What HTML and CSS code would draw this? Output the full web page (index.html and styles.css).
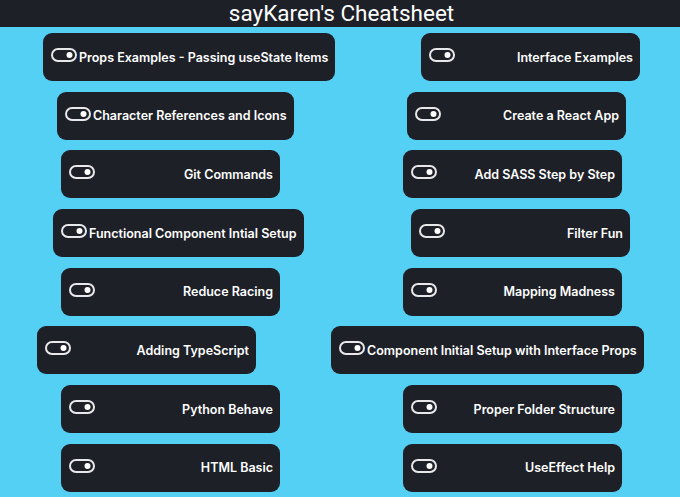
FILE: index.html
```html
<!DOCTYPE html>
<html lang="en">
<head>
<meta charset="utf-8">
<title>sayKaren's Cheatsheet</title>
<link rel="stylesheet" href="styles.css">
</head>
<body>
<header class="topbar"><h1 class="title">sayKaren's Cheatsheet</h1></header>
<main class="grid">
  <div class="cell"><button class="card off-43"><svg class="toggle" viewBox="0 0 26 14"><rect x="1" y="1" width="24" height="12" rx="6"/><circle cx="18.5" cy="7" r="3"/></svg><span class="label">Props Examples - Passing useState Items</span></button></div>
  <div class="cell right"><button class="card off-81"><svg class="toggle" viewBox="0 0 26 14"><rect x="1" y="1" width="24" height="12" rx="6"/><circle cx="18.5" cy="7" r="3"/></svg><span class="label">Interface Examples</span></button></div>

  <div class="cell"><button class="card off-57"><svg class="toggle" viewBox="0 0 26 14"><rect x="1" y="1" width="24" height="12" rx="6"/><circle cx="18.5" cy="7" r="3"/></svg><span class="label">Character References and Icons</span></button></div>
  <div class="cell right"><button class="card off-67"><svg class="toggle" viewBox="0 0 26 14"><rect x="1" y="1" width="24" height="12" rx="6"/><circle cx="18.5" cy="7" r="3"/></svg><span class="label">Create a React App</span></button></div>

  <div class="cell"><button class="card off-61"><svg class="toggle" viewBox="0 0 26 14"><rect x="1" y="1" width="24" height="12" rx="6"/><circle cx="18.5" cy="7" r="3"/></svg><span class="label">Git Commands</span></button></div>
  <div class="cell right"><button class="card off-63"><svg class="toggle" viewBox="0 0 26 14"><rect x="1" y="1" width="24" height="12" rx="6"/><circle cx="18.5" cy="7" r="3"/></svg><span class="label">Add SASS Step by Step</span></button></div>

  <div class="cell"><button class="card off-53"><svg class="toggle" viewBox="0 0 26 14"><rect x="1" y="1" width="24" height="12" rx="6"/><circle cx="18.5" cy="7" r="3"/></svg><span class="label">Functional Component Intial Setup</span></button></div>
  <div class="cell right"><button class="card off-71"><svg class="toggle" viewBox="0 0 26 14"><rect x="1" y="1" width="24" height="12" rx="6"/><circle cx="18.5" cy="7" r="3"/></svg><span class="label">Filter Fun</span></button></div>

  <div class="cell"><button class="card off-61"><svg class="toggle" viewBox="0 0 26 14"><rect x="1" y="1" width="24" height="12" rx="6"/><circle cx="18.5" cy="7" r="3"/></svg><span class="label">Reduce Racing</span></button></div>
  <div class="cell right"><button class="card off-63"><svg class="toggle" viewBox="0 0 26 14"><rect x="1" y="1" width="24" height="12" rx="6"/><circle cx="18.5" cy="7" r="3"/></svg><span class="label">Mapping Madness</span></button></div>

  <div class="cell"><button class="card off-37"><svg class="toggle" viewBox="0 0 26 14"><rect x="1" y="1" width="24" height="12" rx="6"/><circle cx="18.5" cy="7" r="3"/></svg><span class="label">Adding TypeScript</span></button></div>
  <div class="cell right"><button class="card off-n9"><svg class="toggle" viewBox="0 0 26 14"><rect x="1" y="1" width="24" height="12" rx="6"/><circle cx="18.5" cy="7" r="3"/></svg><span class="label">Component Initial Setup with Interface Props</span></button></div>

  <div class="cell"><button class="card off-61"><svg class="toggle" viewBox="0 0 26 14"><rect x="1" y="1" width="24" height="12" rx="6"/><circle cx="18.5" cy="7" r="3"/></svg><span class="label">Python Behave</span></button></div>
  <div class="cell right"><button class="card off-63"><svg class="toggle" viewBox="0 0 26 14"><rect x="1" y="1" width="24" height="12" rx="6"/><circle cx="18.5" cy="7" r="3"/></svg><span class="label">Proper Folder Structure</span></button></div>

  <div class="cell"><button class="card off-61"><svg class="toggle" viewBox="0 0 26 14"><rect x="1" y="1" width="24" height="12" rx="6"/><circle cx="18.5" cy="7" r="3"/></svg><span class="label">HTML Basic</span></button></div>
  <div class="cell right"><button class="card off-63"><svg class="toggle" viewBox="0 0 26 14"><rect x="1" y="1" width="24" height="12" rx="6"/><circle cx="18.5" cy="7" r="3"/></svg><span class="label">UseEffect Help</span></button></div>
</main>
</body>
</html>
```
FILE: styles.css
```css
* { box-sizing: border-box; }
html, body {
  margin: 0;
  padding: 0;
  background: #55d0f5;
  height: 100%;
  overflow: hidden;
}
body { font-family: Inter, "Noto Sans", sans-serif; }
.topbar {
  background: #1e2028;
  height: 27px;
  display: flex;
  align-items: center;
  justify-content: center;
  padding-left: 3px;
}
.title {
  margin: 0;
  color: #ffffff;
  font-family: Roboto, "Liberation Sans", sans-serif;
  font-weight: 400;
  font-size: 22.5px;
  line-height: 27px;
  letter-spacing: 0;
}
.grid {
  display: grid;
  grid-template-columns: 340px 340px;
  grid-auto-rows: 48px;
  row-gap: 10.7px;
  padding-top: 6px;
}
.cell { display: flex; }
.card {
  display: flex;
  align-items: center;
  justify-content: space-between;
  min-width: 219px;
  height: 48px;
  padding: 0 7px 0 8px;
  background: #1e2028;
  border: none;
  border-radius: 9px;
  color: #ffffff;
  font-family: Inter, "Noto Sans", sans-serif;
  font-weight: 600;
  font-size: 12.5px;
  cursor: pointer;
}
.toggle {
  width: 26px;
  height: 14px;
  margin: 0 2px 4px 0;
  flex: none;
}
.toggle rect {
  fill: none;
  stroke: #e8e8ea;
  stroke-width: 2;
}
.toggle circle { fill: #ffffff; }
.label { white-space: nowrap; }
.off-37 { margin-left: 37px; }
.off-43 { margin-left: 43px; }
.off-53 { margin-left: 53px; }
.off-57 { margin-left: 57px; }
.off-61 { margin-left: 61px; }
.off-63 { margin-left: 63px; }
.off-67 { margin-left: 67px; }
.off-71 { margin-left: 71px; }
.off-81 { margin-left: 81px; }
.off-n9 { margin-left: -9px; }
```
